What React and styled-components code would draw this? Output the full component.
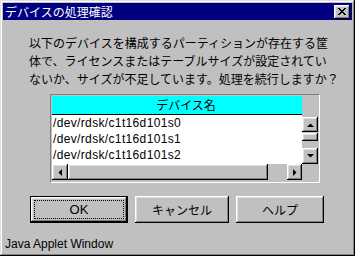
import React from "react";
import styled, { createGlobalStyle, css } from "styled-components";

const Global = createGlobalStyle`
  html, body { margin: 0; padding: 0; background: #c0c0c0; }
  body { width: 355px; height: 256px; overflow: hidden; }
`;

const jp = `"Noto Sans CJK JP", "Noto Sans", sans-serif`;
const latin = `"Liberation Sans", Arial, sans-serif`;

const raised = css`
  background: #c0c0c0;
  box-shadow: inset -1px -1px #000, inset 1px 1px #fff, inset -2px -2px #808080, inset 2px 2px #dfdfdf;
`;

const Window = styled.div`
  box-sizing: border-box;
  width: 355px;
  height: 256px;
  background: #c0c0c0;
  padding: 3px;
  box-shadow: inset -1px -1px #000, inset 1px 1px #dfdfdf, inset -2px -2px #808080, inset 2px 2px #fff;
  display: flex;
  flex-direction: column;
`;

const TitleBar = styled.div`
  height: 17px;
  background: #000080;
  color: #fff;
  font-family: ${jp};
  font-size: 12px;
  line-height: 17px;
  padding-left: 2px;
  padding-right: 2px;
  display: flex;
  align-items: center;
  justify-content: space-between;
`;

const CloseButton = styled.div`
  ${raised};
  width: 16px;
  height: 14px;
  display: flex;
  align-items: center;
  justify-content: center;
`;

const Message = styled.p`
  margin: 14px 0 0 26px;
  font-family: ${jp};
  font-size: 12px;
  line-height: 18px;
  color: #000;
  white-space: nowrap;
`;

const ListFrame = styled.div`
  margin: 6px 0 0 47px;
  width: 270px;
  height: 89px;
  box-sizing: border-box;
  border: 1px solid;
  border-color: #808080 #fff #fff #808080;
  padding: 1px;
  display: grid;
  grid-template-columns: 250px 16px;
  grid-template-rows: 68px 16px;
  background: #c0c0c0;
`;

const ListBody = styled.div`
  background: #fff;
  display: flex;
  flex-direction: column;
  overflow: hidden;
`;

const Header = styled.div`
  height: 18px;
  background: #00ffff;
  border-bottom: 1px solid #000;
  font-family: ${jp};
  font-size: 12px;
  line-height: 18px;
  color: #000;
  padding-left: 18px;
  text-align: center;
`;

const Row = styled.div`
  height: 16px;
  line-height: 16px;
  padding-left: 1px;
  font-family: ${latin};
  font-size: 12px;
  letter-spacing: 0.35px;
  color: #000;
  white-space: nowrap;
`;

const VScroll = styled.div`
  display: flex;
  flex-direction: column;
  padding-top: 21px;
`;

const ScrollBtn = styled.div`
  ${raised};
  width: ${p => p.$w || 16}px;
  height: ${p => p.$h || 15}px;
  flex: none;
  display: flex;
  align-items: center;
  justify-content: center;
`;

const Thumb = styled.div`
  ${raised};
  flex: none;
  width: ${p => p.$w}px;
  height: ${p => p.$h}px;
  margin-top: ${p => p.$mt || 0}px;
`;

const Spacer = styled.div`
  flex: 1;
`;

const HScroll = styled.div`
  display: flex;
  align-items: stretch;
`;

const Corner = styled.div`
  background: #c0c0c0;
`;

const ButtonRow = styled.div`
  margin: 13px 0 0 27px;
  display: flex;
  gap: 7px;
`;

const Button = styled.div`
  ${raised};
  box-sizing: border-box;
  width: ${p => p.$w}px;
  height: 27px;
  display: flex;
  align-items: center;
  justify-content: center;
  font-family: ${p => (p.$latin ? latin : jp)};
  font-size: ${p => (p.$latin ? 13 : 12)}px;
  color: #000;
  ${p =>
    p.$default &&
    css`
      box-shadow: inset 0 0 0 1px #000, inset -2px -2px #000, inset 2px 2px #fff, inset -3px -3px #808080, inset 3px 3px #dfdfdf;
    `}
`;

const FocusRect = styled.div`
  box-sizing: border-box;
  width: calc(100% - 8px);
  height: calc(100% - 8px);
  border: 1px dotted #000;
  display: flex;
  align-items: center;
  justify-content: center;
`;

const Status = styled.div`
  margin-top: auto;
  margin-left: 2px;
  margin-bottom: 2px;
  font-family: ${latin};
  font-size: 12px;
  line-height: 14px;
  color: #000;
`;

const Arrow = ({ dir }) => {
  const pts = {
    up: "0,4 7,4 3.5,0.5",
    down: "0,0 7,0 3.5,3.5",
    left: "4,0 4,7 0.5,3.5",
    right: "0,0 0,7 3.5,3.5",
  }[dir];
  const vertical = dir === "up" || dir === "down";
  return (
    <svg width={vertical ? 7 : 4} height={vertical ? 4 : 7} viewBox={vertical ? "0 0 7 4" : "0 0 4 7"}>
      <polygon points={pts} fill="#000" />
    </svg>
  );
};

const XIcon = () => (
  <svg width="8" height="7" viewBox="0 0 8 7" shapeRendering="crispEdges">
    <path d="M0 0h2v1h-2zM6 0h2v1h-2zM1 1h2v1h-2zM5 1h2v1h-2zM2 2h4v1h-4zM3 3h2v1h-2zM2 4h4v1h-4zM1 5h2v1h-2zM5 5h2v1h-2zM0 6h2v1h-2zM6 6h2v1h-2z" fill="#000" />
  </svg>
);

const rows = ["/dev/rdsk/c1t16d101s0", "/dev/rdsk/c1t16d101s1", "/dev/rdsk/c1t16d101s2"];

export default function App() {
  return (
    <>
      <Global />
      <Window>
        <TitleBar>
          <span>デバイスの処理確認</span>
          <CloseButton>
            <XIcon />
          </CloseButton>
        </TitleBar>
        <Message>
          以下のデバイスを構成するパーティションが存在する筐
          <br />
          体で、ライセンスまたはテーブルサイズが設定されてい
          <br />
          ないか、サイズが不足しています。処理を続行しますか？
        </Message>
        <ListFrame>
          <ListBody>
            <Header>デバイス名</Header>
            {rows.map(r => (
              <Row key={r}>{r}</Row>
            ))}
          </ListBody>
          <VScroll>
            <ScrollBtn>
              <Arrow dir="up" />
            </ScrollBtn>
            <Thumb $w={16} $h={8} $mt={1} />
            <Spacer />
            <ScrollBtn $h={16}>
              <Arrow dir="down" />
            </ScrollBtn>
          </VScroll>
          <HScroll>
            <ScrollBtn $w={16} $h={16}>
              <Arrow dir="left" />
            </ScrollBtn>
            <Thumb $w={200} $h={16} />
            <Spacer />
            <ScrollBtn $w={15} $h={16}>
              <Arrow dir="right" />
            </ScrollBtn>
          </HScroll>
          <Corner />
        </ListFrame>
        <ButtonRow>
          <Button $w={98} $default $latin>
            <FocusRect>OK</FocusRect>
          </Button>
          <Button $w={94}>キャンセル</Button>
          <Button $w={88}>ヘルプ</Button>
        </ButtonRow>
        <Status>Java Applet Window</Status>
      </Window>
    </>
  );
}
